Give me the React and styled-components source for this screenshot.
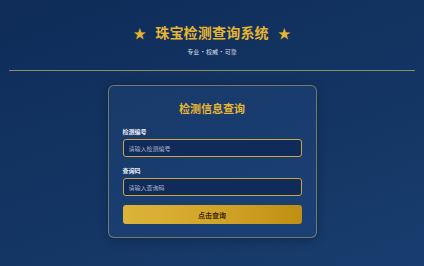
import React from 'react'
import styled, { createGlobalStyle } from 'styled-components'

const GlobalStyle = createGlobalStyle`
  html, body {
    margin: 0;
    padding: 0;
    height: 100%;
  }
  body {
    font-family: "Noto Sans CJK SC", "Noto Sans", sans-serif;
    background: linear-gradient(160deg, #0f2c58 0%, #133462 50%, #183d6e 100%);
    min-height: 266px;
    overflow: hidden;
  }
`

const Page = styled.div`
  width: 424px;
  height: 266px;
  padding-top: 21px;
  box-sizing: border-box;
`

const Header = styled.header`
  display: flex;
  flex-direction: column;
  align-items: center;
`

const TitleRow = styled.div`
  display: flex;
  align-items: center;
  gap: 9px;
  height: 22px;
`

const Star = styled.span`
  color: #e4b52f;
  font-size: 13px;
  line-height: 1;
`

const Title = styled.h1`
  margin: 0;
  color: #e6b630;
  font-size: 14px;
  font-weight: 700;
  letter-spacing: 0.2px;
  line-height: 22px;
`

const Subtitle = styled.div`
  margin-top: 5px;
  color: #d9dfea;
  font-size: 6px;
  line-height: 8px;
  word-spacing: -1px;
`

const Divider = styled.hr`
  margin: 14px 9px 0;
  border: none;
  height: 1px;
  background: #8e8b6a;
`

const Card = styled.section`
  width: 209px;
  box-sizing: border-box;
  margin: 14px auto 0;
  padding: 14px 14px 13px;
  border: 1px solid rgba(190, 170, 110, 0.55);
  border-radius: 6px;
  background: linear-gradient(160deg, #183a6b 0%, #1b4073 100%);
  box-shadow: 0 2px 10px rgba(0, 0, 0, 0.25);
`

const CardTitle = styled.h2`
  margin: 0 0 11px;
  text-align: center;
  color: #e6b630;
  font-size: 11px;
  font-weight: 700;
  line-height: 16px;
`

const Field = styled.div`
  display: flex;
  flex-direction: column;
  gap: 3px;
  margin-bottom: 9px;
`

const Label = styled.label`
  color: #eef1f6;
  font-size: 6px;
  font-weight: 700;
  line-height: 9px;
`

const Input = styled.input`
  height: 18px;
  box-sizing: border-box;
  padding: 0 5px;
  border: 1px solid #c9a642;
  border-radius: 3px;
  background: #102b59;
  color: #fff;
  font-family: inherit;
  font-size: 6px;
  outline: none;
  &::placeholder {
    color: #a9b4c6;
  }
`

const Button = styled.button`
  display: block;
  width: 100%;
  height: 19px;
  border: none;
  border-radius: 3px;
  background: linear-gradient(90deg, #dcb43a 0%, #d2a52a 50%, #c08f12 100%);
  color: #3b2c08;
  font-family: inherit;
  font-size: 7px;
  font-weight: 700;
  cursor: pointer;
`

export default function App() {
  return (
    <>
      <GlobalStyle />
      <Page>
        <Header>
          <TitleRow>
            <Star>★</Star>
            <Title>珠宝检测查询系统</Title>
            <Star>★</Star>
          </TitleRow>
          <Subtitle>专业 · 权威 · 可靠</Subtitle>
        </Header>
        <Divider />
        <Card>
          <CardTitle>检测信息查询</CardTitle>
          <Field>
            <Label>检测编号</Label>
            <Input placeholder="请输入检测编号" />
          </Field>
          <Field>
            <Label>查询码</Label>
            <Input placeholder="请输入查询码" />
          </Field>
          <Button>点击查询</Button>
        </Card>
      </Page>
    </>
  )
}
